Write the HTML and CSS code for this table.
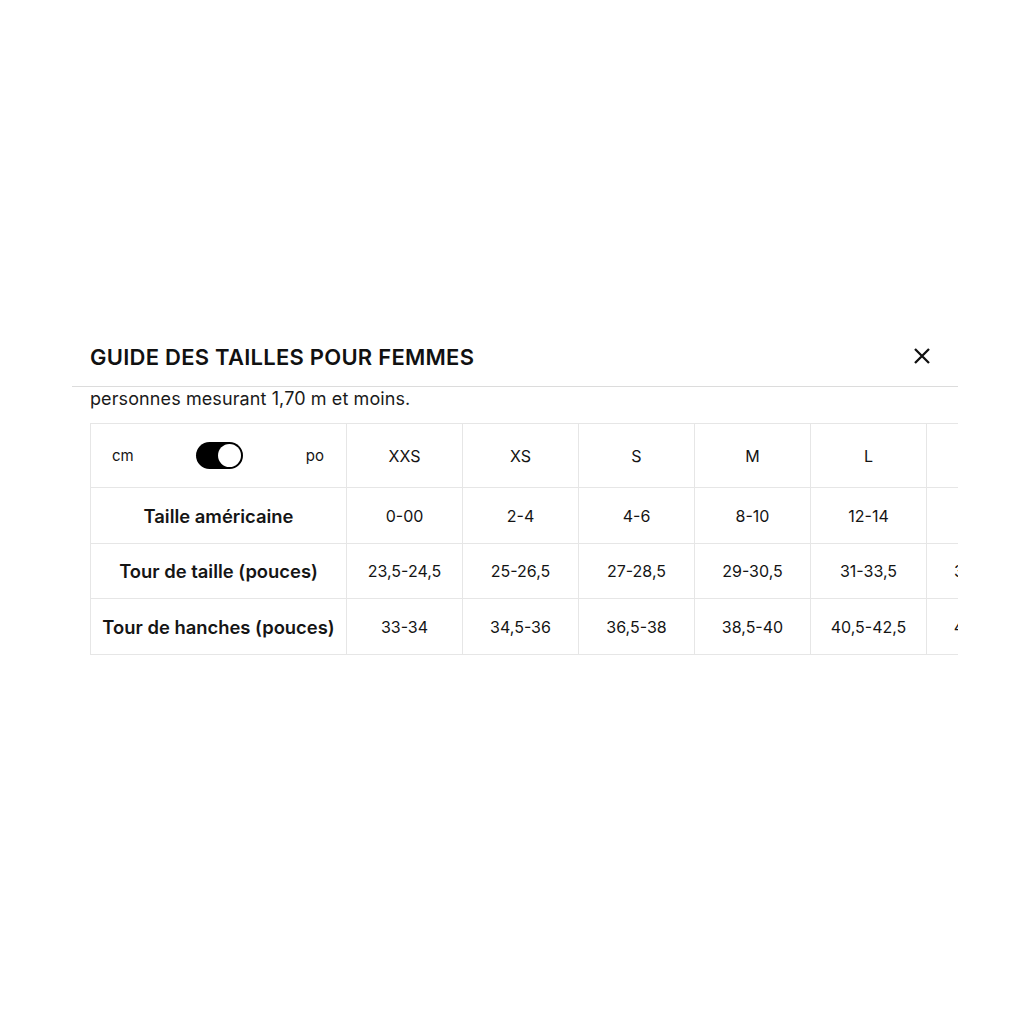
FILE: index.html
```html
<!DOCTYPE html>
<html lang="fr">
<head>
<meta charset="utf-8">
<title>Guide des tailles</title>
<link rel="stylesheet" href="styles.css">
</head>
<body>
<div class="modal">
  <div class="modal-header">
    <h2 class="modal-title">GUIDE DES TAILLES POUR FEMMES</h2>
    <button class="close" aria-label="Fermer">
      <svg width="18" height="18" viewBox="0 0 18 18"><path d="M2 2L16 16M16 2L2 16" stroke="#111" stroke-width="2.3" fill="none"/></svg>
    </button>
  </div>
  <div class="modal-body">
    <p class="intro">personnes mesurant 1,70 m et moins.</p>
    <table class="sizes">
      <tr class="r-head">
        <td class="first">
          <div class="units">
            <span>cm</span>
            <span class="toggle"><span class="knob"></span></span>
            <span>po</span>
          </div>
        </td>
        <td>XXS</td><td>XS</td><td>S</td><td>M</td><td>L</td><td>XL</td>
      </tr>
      <tr class="r2">
        <th>Taille américaine</th>
        <td>0-00</td><td>2-4</td><td>4-6</td><td>8-10</td><td>12-14</td><td>16-18</td>
      </tr>
      <tr class="r3">
        <th>Tour de taille (pouces)</th>
        <td>23,5-24,5</td><td>25-26,5</td><td>27-28,5</td><td>29-30,5</td><td>31-33,5</td><td>34-36,5</td>
      </tr>
      <tr class="r4">
        <th>Tour de hanches (pouces)</th>
        <td>33-34</td><td>34,5-36</td><td>36,5-38</td><td>38,5-40</td><td>40,5-42,5</td><td>43-45,5</td>
      </tr>
    </table>
  </div>
</div>
</body>
</html>
```
FILE: styles.css
```css
html, body {
  margin: 0;
  padding: 0;
  background: #fff;
}
body {
  font-family: "Inter", "Liberation Sans", sans-serif;
  color: #141414;
  padding-top: 330px;
}
.modal {
  margin-left: 72px;
  width: 886px;
}
.modal-header {
  display: flex;
  align-items: center;
  justify-content: space-between;
  height: 56px;
  padding: 0 27px 0 18px;
  border-bottom: 1px solid #dcdcdc;
}
.modal-title {
  margin: 0 0 3px;
  font-size: 22px;
  font-weight: 600;
  letter-spacing: 0.25px;
  color: #111;
}
.close {
  border: 0;
  background: none;
  padding: 0;
  width: 18px;
  height: 18px;
  display: flex;
  margin-top: -4px;
}
.modal-body {
  overflow: hidden;
  padding-left: 18px;
}
.intro {
  margin: 0 0 14px;
  padding-top: 1px;
  height: 21px;
  font-size: 18px;
  line-height: 22px;
  letter-spacing: 0.1px;
  color: #1a1a1a;
  white-space: nowrap;
}
.sizes {
  border-collapse: collapse;
  table-layout: fixed;
  width: 946px;
  font-size: 16px;
}
.sizes td, .sizes th {
  border: 1px solid #e6e6e6;
  text-align: center;
  padding: 0;
  width: 115px;
  white-space: nowrap;
  overflow: hidden;
}
.sizes th, .sizes td.first {
  width: 255px;
}
.sizes th {
  font-weight: 600;
  font-size: 18.4px;
  color: #151515;
}
.r-head { height: 64px; }
.r2 { height: 56px; }
.r3 { height: 55px; }
.r4 { height: 56px; }
.units {
  display: flex;
  align-items: center;
  justify-content: space-between;
  padding: 0 22px 0 21px;
  font-size: 15px;
}
.toggle {
  width: 47px;
  height: 27px;
  background: #000;
  border-radius: 14px;
  position: relative;
  display: block;
}
.knob {
  position: absolute;
  right: 2px;
  top: 2px;
  width: 23px;
  height: 23px;
  border-radius: 50%;
  background: #fff;
}
```
